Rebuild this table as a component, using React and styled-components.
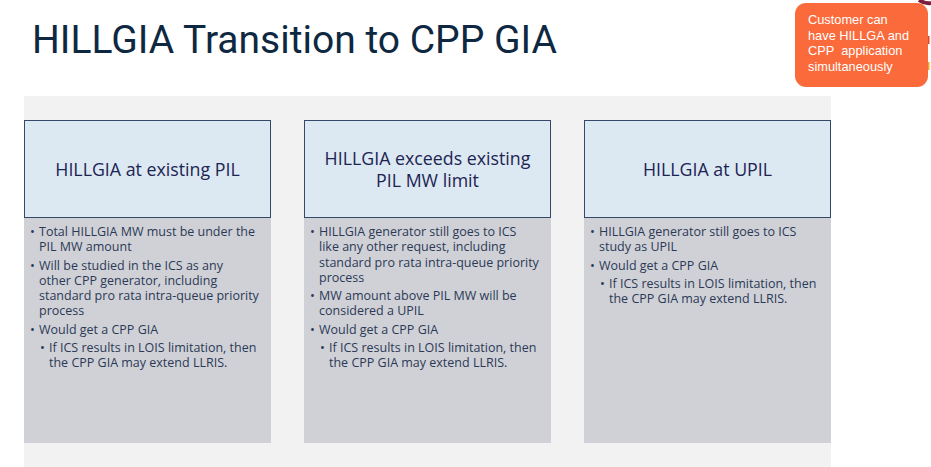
import React from "react";
import styled, { createGlobalStyle } from "styled-components";

const GlobalStyle = createGlobalStyle`
  body {
    margin: 0;
    background: #ffffff;
  }
`;

const Slide = styled.div`
  position: relative;
  width: 931px;
  height: 467px;
  overflow: hidden;
  background: #ffffff;
`;

const Title = styled.h1`
  margin: 0;
  padding: 21px 0 0 32px;
  height: 75px;
  font-family: Roboto, "Liberation Sans", sans-serif;
  font-weight: 400;
  font-size: 39px;
  line-height: 39px;
  color: #0e2841;
  letter-spacing: 0;
`;

const Panel = styled.div`
  margin-left: 24px;
  width: 807px;
  height: 371px;
  box-sizing: border-box;
  padding: 24px 0;
  background: #f2f2f2;
  display: flex;
  gap: 33px;
`;

const Card = styled.div`
  width: 247px;
  display: flex;
  flex-direction: column;
`;

const Header = styled.div`
  height: 98px;
  box-sizing: border-box;
  border: 1.5px solid #34496a;
  background: #dde9f2;
  display: flex;
  align-items: center;
  justify-content: center;
  text-align: center;
  font-family: "Open Sans", sans-serif;
  font-size: 17.8px;
  line-height: 22px;
  color: #1c2453;
  padding: 0 10px;
`;

const Body = styled.div`
  flex: 1;
  background: #d0d1d6;
  padding: 6px 0 0 0;
  font-family: "Open Sans", sans-serif;
  font-size: 12.5px;
  line-height: 15.3px;
  color: #2b3956;
`;

const Item = styled.div`
  display: flex;
  padding-left: ${(p) => (p.$sub ? 16 : 6)}px;
  margin-bottom: 3px;
`;

const Dot = styled.span`
  width: 9px;
  flex: none;
  font-size: 13px;
`;

const Lines = styled.div`
  white-space: nowrap;
`;

const Line = styled.div``;

const Callout = styled.div`
  position: absolute;
  top: 3px;
  left: 795px;
  width: 133px;
  height: 84px;
  box-sizing: border-box;
  border-radius: 11px;
  background: #fa6a3b;
  padding: 9px 0 0 13px;
  font-family: "Liberation Sans", Arial, sans-serif;
  font-size: 12.8px;
  line-height: 15.6px;
  color: #ffffff;
  white-space: pre;
  z-index: 2;
`;

const Decor = styled.svg`
  position: absolute;
  top: 0;
  right: 0;
  z-index: 1;
`;

const cards = [
  {
    title: ["HILLGIA at existing PIL"],
    items: [
      { lines: ["Total HILLGIA MW must be under the", "PIL MW amount"] },
      {
        lines: [
          "Will be studied in the ICS as any",
          "other CPP generator, including",
          "standard pro rata intra-queue priority",
          "process",
        ],
      },
      { lines: ["Would get a CPP GIA"] },
      { sub: true, lines: ["If ICS results in LOIS limitation, then", "the CPP GIA may extend LLRIS."] },
    ],
  },
  {
    title: ["HILLGIA exceeds existing", "PIL MW limit"],
    items: [
      {
        lines: [
          "HILLGIA generator still goes to ICS",
          "like any other request, including",
          "standard pro rata intra-queue priority",
          "process",
        ],
      },
      { lines: ["MW amount above PIL MW will be", "considered a UPIL"] },
      { lines: ["Would get a CPP GIA"] },
      { sub: true, lines: ["If ICS results in LOIS limitation, then", "the CPP GIA may extend LLRIS."] },
    ],
  },
  {
    title: ["HILLGIA at UPIL"],
    items: [
      { lines: ["HILLGIA generator still goes to ICS", "study as UPIL"] },
      { lines: ["Would get a CPP GIA"] },
      { sub: true, lines: ["If ICS results in LOIS limitation, then", "the CPP GIA may extend LLRIS."] },
    ],
  },
];

const App = () => {
  return (
    <>
      <GlobalStyle />
      <Slide>
        <Title>HILLGIA Transition to CPP GIA</Title>
        <Panel>
          {cards.map((card, index) => (
            <Card key={index}>
              <Header>
                <div>
                  {card.title.map((t, i) => (
                    <Line key={i}>{t}</Line>
                  ))}
                </div>
              </Header>
              <Body>
                {card.items.map((item, i) => (
                  <Item key={i} $sub={item.sub}>
                    <Dot>•</Dot>
                    <Lines>
                      {item.lines.map((l, j) => (
                        <Line key={j}>{l}</Line>
                      ))}
                    </Lines>
                  </Item>
                ))}
              </Body>
            </Card>
          ))}
        </Panel>
        <Decor width="16" height="80" viewBox="0 0 16 80">
          <path d="M4 0 Q10 4 16 3" stroke="#7a1f3d" strokeWidth="4" fill="none" />
          <path d="M13 36 L13 44" stroke="#e0452b" strokeWidth="3" />
          <path d="M13 62 L13 70" stroke="#f5a623" strokeWidth="3" />
        </Decor>
        <Callout>{"Customer can\nhave HILLGA and\nCPP  application\nsimultaneously"}</Callout>
      </Slide>
    </>
  );
};

export default App;
